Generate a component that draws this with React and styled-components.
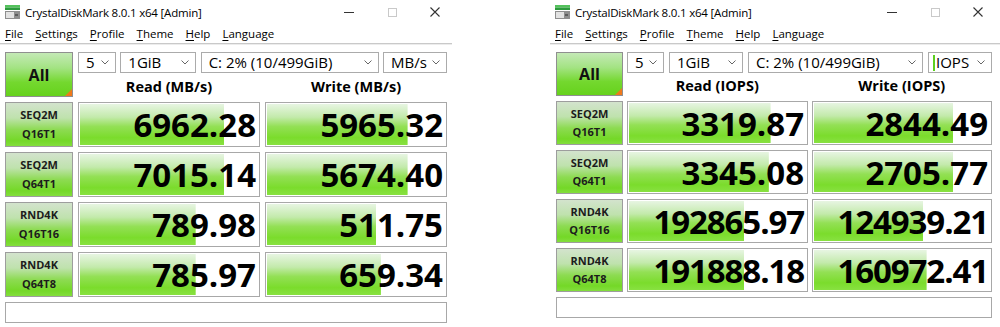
import React from "react";
import styled, { createGlobalStyle } from "styled-components";

const GlobalStyle = createGlobalStyle`
  *, *::before, *::after { box-sizing: border-box; }
  html, body { margin: 0; padding: 0; background: #fff; }
  body {
    width: 1000px;
    height: 327px;
    overflow: hidden;
    font-family: "Open Sans", "Noto Sans", sans-serif;
    color: #000;
  }
`;

const Page = styled.div`
  display: flex;
  justify-content: space-between;
  width: 1000px;
  height: 327px;
`;

const Window = styled.div`
  width: ${(p) => p.$w}px;
  display: flex;
  flex-direction: column;
  background: #fff;
`;

const TitleBar = styled.div`
  height: 24px;
  display: flex;
  align-items: center;
  padding-left: 5px;
  gap: 5px;
  font-size: 11.5px;
  letter-spacing: -0.2px;
`;

const Controls = styled.div`
  margin-left: auto;
  display: flex;
  align-items: center;
  gap: 33px;
  padding-right: ${(p) => p.$pr}px;
`;

const MenuBar = styled.div`
  height: 20px;
  display: flex;
  align-items: center;
  gap: 12px;
  padding-left: 5px;
  font-size: 11.5px;
  border-bottom: 1px solid #c9c9c9;
  box-shadow: 0 1px 0 #ececec;
`;

const MenuItem = styled.span`
  white-space: nowrap;
`;

const Key = styled.span`
  text-decoration: underline;
  text-underline-offset: 2px;
`;

const Body = styled.div`
  display: grid;
  grid-template-columns: ${(p) => p.$cols};
  grid-template-rows: ${(p) => `${p.$rowH}px repeat(4, ${p.$rowH}px) 21px`};
  column-gap: ${(p) => p.$gap}px;
  row-gap: 5px;
  padding: 8px 0 0 ${(p) => p.$pl}px;
`;

const AllButton = styled.div`
  position: relative;
  border: 1px solid #8f8f8f;
  background: linear-gradient(
    to bottom,
    #c4e9b6 0%,
    #a3e382 35%,
    #74d82f 68%,
    #66d21c 100%
  );
  display: flex;
  align-items: center;
  justify-content: center;
  font-weight: 700;
  font-size: 16px;
  color: #111;
`;

const Corner = styled.span`
  position: absolute;
  right: 0;
  bottom: 0;
  width: 0;
  height: 0;
  border-left: 7px solid transparent;
  border-bottom: 7px solid #f0791c;
`;

const TopArea = styled.div`
  grid-column: 2 / 4;
  display: grid;
  grid-template-rows: 21px 1fr;
`;

const ComboRow = styled.div`
  display: flex;
  justify-content: space-between;
`;

const Combo = styled.div`
  width: ${(p) => p.$w}px;
  height: 21px;
  border: 1px solid #ababab;
  background: #fff;
  display: flex;
  align-items: center;
  padding: 0 6px 0 ${(p) => (p.$caret ? 4 : 7)}px;
  font-size: 15px;
  color: #000;
  white-space: nowrap;
`;

const Caret = styled.span`
  width: 2px;
  height: 16px;
  background: #5ccf1f;
  margin-right: 1px;
`;

const ComboText = styled.span`
  flex: 1;
  line-height: 1;
`;

const Headers = styled.div`
  display: grid;
  grid-template-columns: 1fr 1fr;
  column-gap: ${(p) => p.$gap}px;
  align-items: center;
`;

const Header = styled.div`
  text-align: center;
  font-weight: 700;
  font-size: 14.5px;
  padding-top: 2px;
`;

const LabelCell = styled.div`
  border: 1px solid #9d9d9d;
  background: linear-gradient(
    to bottom,
    #d3e3cd 0%,
    #bfe2ad 35%,
    #8ddb52 62%,
    #74d827 88%,
    #83de3d 100%
  );
  display: flex;
  flex-direction: column;
  align-items: center;
  justify-content: center;
  font-weight: 700;
  font-size: 11px;
  line-height: 18.5px;
  color: #1c1c1c;
`;

const ValueCell = styled.div`
  border: 1px solid #a8a8a8;
  padding: 1px;
  background: #fff;
  display: flex;
`;

const Meter = styled.div`
  flex: 1;
  display: flex;
  align-items: center;
  justify-content: flex-end;
  padding-right: 2px;
  background: linear-gradient(
      to bottom,
      #e7f5e2 0%,
      #c3eaab 32%,
      #93e055 55%,
      #7bdc2c 82%,
      #88e141 100%
    )
    left top / ${(p) => p.$fill}% 100% no-repeat;
  font-weight: 700;
  font-size: 33px;
  line-height: 1;
  letter-spacing: ${(p) => (p.$tight ? "-1.1px" : "0")};
  color: #000;
`;

const Comment = styled.div`
  grid-column: 1 / 4;
  border: 1px solid #a8a8a8;
  background: #fff;
`;

function AppIcon() {
  return (
    <svg width="15" height="14" viewBox="0 0 15 14">
      <rect x="0" y="0" width="15" height="2.5" fill="#54c25c" />
      <rect x="0" y="2.5" width="15" height="2.5" fill="#2c9a3c" />
      <rect x="0" y="6" width="15" height="8" fill="#8e8e8e" />
      <rect x="1" y="7" width="8" height="6" fill="#e2e2e2" />
      <rect x="10" y="9" width="3" height="2" fill="#5c5c5c" />
    </svg>
  );
}

function WinControls({ pr }) {
  return (
    <Controls $pr={pr}>
      <svg width="10" height="10" viewBox="0 0 10 10">
        <line x1="0" y1="5.5" x2="10" y2="5.5" stroke="#333" strokeWidth="1" />
      </svg>
      <svg width="10" height="10" viewBox="0 0 10 10">
        <rect x="1.5" y="1.5" width="8" height="8" fill="none" stroke="#c9c9c9" strokeWidth="1" />
      </svg>
      <svg width="10" height="10" viewBox="0 0 10 10">
        <path d="M0.5 0.5 L9.5 9.5 M9.5 0.5 L0.5 9.5" stroke="#333" strokeWidth="1.1" />
      </svg>
    </Controls>
  );
}

function Chevron() {
  return (
    <svg width="8" height="5" viewBox="0 0 8 5">
      <polyline points="0.5,0.5 4,4 7.5,0.5" fill="none" stroke="#666" strokeWidth="1" />
    </svg>
  );
}

const menus = [
  ["F", "ile"],
  ["S", "ettings"],
  ["P", "rofile"],
  ["T", "heme"],
  ["H", "elp"],
  ["L", "anguage"],
];

const windows = [
  {
    id: "mbs",
    width: 452,
    pl: 5,
    cols: "68px 182px 182px",
    gap: 5,
    rowH: 45,
    ctrlPr: 12,
    combos: [38, 76, 178, 64],
    unit: "MB/s",
    caret: false,
    rows: [
      ["SEQ2M", "Q16T1", "6962.28", 81, "5965.32", 79],
      ["SEQ2M", "Q64T1", "7015.14", 81, "5674.40", 79],
      ["RND4K", "Q16T16", "789.98", 65, "511.75", 61.5],
      ["RND4K", "Q64T8", "785.97", 65, "659.34", 64],
    ],
  },
  {
    id: "iops",
    width: 450,
    pl: 6,
    cols: "67px 181px 180px",
    gap: 4,
    rowH: 44,
    ctrlPr: 17,
    combos: [37, 74, 175, 64],
    unit: "IOPS",
    caret: true,
    rows: [
      ["SEQ2M", "Q16T1", "3319.87", 80, "2844.49", 79],
      ["SEQ2M", "Q64T1", "3345.08", 79, "2705.77", 79],
      ["RND4K", "Q16T16", "192865.97", 65, "124939.21", 62],
      ["RND4K", "Q64T8", "191888.18", 65, "160972.41", 64],
    ],
  },
];

function BenchWindow({ w }) {
  const header = w.unit;
  return (
    <Window $w={w.width}>
      <TitleBar>
        <AppIcon />
        <span>CrystalDiskMark 8.0.1 x64 [Admin]</span>
        <WinControls pr={w.ctrlPr} />
      </TitleBar>
      <MenuBar>
        {menus.map(([k, rest]) => (
          <MenuItem key={k}>
            <Key>{k}</Key>
            {rest}
          </MenuItem>
        ))}
      </MenuBar>
      <Body $cols={w.cols} $gap={w.gap} $rowH={w.rowH} $pl={w.pl}>
        <AllButton>
          All
          <Corner />
        </AllButton>
        <TopArea>
          <ComboRow>
            <Combo $w={w.combos[0]}>
              <ComboText>5</ComboText>
              <Chevron />
            </Combo>
            <Combo $w={w.combos[1]}>
              <ComboText>1GiB</ComboText>
              <Chevron />
            </Combo>
            <Combo $w={w.combos[2]}>
              <ComboText>C: 2% (10/499GiB)</ComboText>
              <Chevron />
            </Combo>
            <Combo $w={w.combos[3]} $caret={w.caret}>
              {w.caret && <Caret />}
              <ComboText>{w.unit}</ComboText>
              <Chevron />
            </Combo>
          </ComboRow>
          <Headers $gap={w.gap}>
            <Header>Read ({header})</Header>
            <Header>Write ({header})</Header>
          </Headers>
        </TopArea>
        {w.rows.map(([a, b, read, rf, write, wf]) => (
          <React.Fragment key={a + b}>
            <LabelCell>
              <span>{a}</span>
              <span>{b}</span>
            </LabelCell>
            <ValueCell>
              <Meter $fill={rf} $tight={read.length > 8}>
                {read}
              </Meter>
            </ValueCell>
            <ValueCell>
              <Meter $fill={wf} $tight={write.length > 8}>
                {write}
              </Meter>
            </ValueCell>
          </React.Fragment>
        ))}
        <Comment />
      </Body>
    </Window>
  );
}

export default function App() {
  return (
    <>
      <GlobalStyle />
      <Page>
        {windows.map((w) => (
          <BenchWindow key={w.id} w={w} />
        ))}
      </Page>
    </>
  );
}
